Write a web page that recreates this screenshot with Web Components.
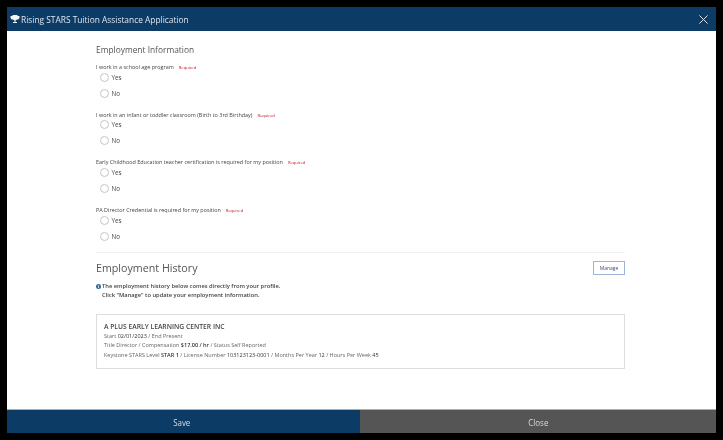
<!DOCTYPE html>
<html>
<head>
<meta charset="utf-8">
<title>Rising STARS</title>
<style>
html, body { margin: 0; padding: 0; background: #000; }
body { width: 723px; height: 440px; overflow: hidden; font-family: "Open Sans", sans-serif; }
</style>
</head>
<body>
<app-dialog title-text="Rising STARS Tuition Assistance Application">
  <section-title>Employment Information</section-title>
  <radio-question label="I work in a school age program"></radio-question>
  <radio-question label="I work in an infant or toddler classroom (Birth to 3rd Birthday)"></radio-question>
  <radio-question label="Early Childhood Education teacher certification is required for my position"></radio-question>
  <radio-question label="PA Director Credential is required for my position"></radio-question>
  <employment-history></employment-history>
</app-dialog>

<script>
const dialogTemplate = document.createElement("template");
dialogTemplate.innerHTML = `
  <style>
    :host { display: flex; flex-direction: column; box-sizing: border-box; width: 709px; height: 426px; margin: 7px 0 0 7px; background: #fff; color: #444; }
    header { flex: 0 0 24px; box-sizing: border-box; display: flex; align-items: center; justify-content: space-between; background: #0c3b66; color: #dfe7ef; font-size: 8.400px; padding: 0 8px 0 3px; filter: blur(.3px); }
    .title { display: flex; align-items: center; gap: 1px; }
    main { flex: 1; padding: 13px 91px 0 89px; min-height: 0; filter: blur(.35px); }
    footer { flex: 0 0 24px; box-sizing: border-box; display: flex; border-top: 1px solid #9fb2c4; font-size: 9px; color: #dcdcdc; filter: blur(.3px); }
    footer div { box-sizing: border-box; display: flex; align-items: center; justify-content: center; padding-top: 2px; }
    footer span { display: inline-block; transform: scaleX(.88); }
    .save { width: 353px; padding-right: 3px; background: #0c3b66; }
    .close { flex: 1; background: #555; }
  </style>
  <header>
    <div class="title">
      <svg width="10" height="10" viewBox="0 0 10 10"><path fill="#f2f5f8" d="M2.500 1h5v1H9.500v1.200C9.500 4.600 8.500 5.400 7 5.600 6.600 6 6 6.300 5.500 6.400V8H7v1H3V8h1.500V6.400C4 6.300 3.400 6 3 5.600 1.500 5.400.5 4.600.5 3.200V2h2z"/></svg>
      <span id="title"></span>
    </div>
    <svg width="9" height="9" viewBox="0 0 10 10"><path stroke="#dfe8f0" stroke-width="1.100" d="M.5.500l9 9M9.500.500l-9 9"/></svg>
  </header>
  <main><slot></slot></main>
  <footer><div class="save"><span>Save</span></div><div class="close"><span>Close</span></div></footer>
`;
class AppDialog extends HTMLElement {
  constructor() {
    super();
    const root = this.attachShadow({ mode: "open" });
    root.appendChild(dialogTemplate.content.cloneNode(true));
    root.getElementById("title").textContent = this.getAttribute("title-text");
  }
}
customElements.define("app-dialog", AppDialog);

class SectionTitle extends HTMLElement {
  constructor() {
    super();
    this.attachShadow({ mode: "open" }).innerHTML = `
      <style>:host { display: block; font-size: 8.400px; line-height: 12px; color: #555; margin-bottom: 7px; }</style>
      <slot></slot>`;
  }
}
customElements.define("section-title", SectionTitle);

class RadioQuestion extends HTMLElement {
  constructor() {
    super();
    const root = this.attachShadow({ mode: "open" });
    root.innerHTML = `
      <style>
        :host { display: block; height: 47.700px; }
        .label { font-size: 5.450px; line-height: 8px; margin-bottom: -3px; color: #444; white-space: nowrap; }
        .req { color: #c8102e; font-size: 4.100px; margin-left: 5px; }
        .opt { display: flex; align-items: center; height: 16px; padding-left: 3.500px; font-size: 6.300px; color: #444; gap: 3px; }
        .opt i { width: 7px; height: 7px; border: 1px solid #c4c4c4; border-radius: 50%; background: #fff; }
      </style>
      <div class="label"><span id="text"></span><span class="req">Required</span></div>
      <div class="opt"><i></i>Yes</div>
      <div class="opt"><i></i>No</div>`;
    root.getElementById("text").textContent = this.getAttribute("label");
  }
}
customElements.define("radio-question", RadioQuestion);

const historyTemplate = document.createElement("template");
historyTemplate.innerHTML = `
  <style>
    :host { display: block; border-top: 1px solid #f1f1f1; margin-top: -2px; padding-top: 7px; color: #444; }
    .top { display: flex; justify-content: space-between; align-items: center; }
    h2 { margin: 0; font-size: 10.700px; font-weight: 400; line-height: 16px; color: #555; }
    button { width: 32px; height: 14px; padding: 0; border: 1px solid #9db4d6; background: #fff; color: #3d4f7a; font: 5px "Open Sans", sans-serif; }
    .info { margin-top: 6px; font-size: 5.750px; line-height: 9px; font-weight: 600; color: #444; }
    .info .row { display: flex; align-items: center; gap: 1px; }
    .info .row + .row { padding-left: 6px; }
    .card { box-sizing: border-box; height: 55px; margin-top: 14px; padding: 7px 7px; border: 1px solid #ddd; font-size: 5.500px; line-height: 9.400px; color: #666; white-space: nowrap; }
    .name { font-size: 6.750px; font-weight: 600; color: #444; line-height: 10px; }
    b { font-weight: 400; color: #333; }
    b.s { font-weight: 600; }
  </style>
  <div class="top"><h2>Employment History</h2><button>Manage</button></div>
  <div class="info">
    <div class="row"><svg width="5" height="5" viewBox="0 0 10 10"><circle cx="5" cy="5" r="5" fill="#3a6a96"/><path stroke="#fff" stroke-width="1.600" d="M5 4.200v3.600M5 2v1.400"/></svg>The employment history below comes directly from your profile.</div>
    <div class="row">Click "Manage" to update your employment information.</div>
  </div>
  <div class="card">
    <div class="name">A PLUS EARLY LEARNING CENTER INC</div>
    <div>Start <b>02/01/2023</b> / End Present</div>
    <div>Title Director / Compensation <b class="s">$17.00 / hr</b> / Status Self Reported</div>
    <div>Keystone STARS Level <b class="s">STAR 1</b> / License Number <b>103123123-0001</b> / Months Per Year <b>12</b> / Hours Per Week <b>45</b></div>
  </div>
`;
class EmploymentHistory extends HTMLElement {
  constructor() {
    super();
    this.attachShadow({ mode: "open" }).appendChild(historyTemplate.content.cloneNode(true));
  }
}
customElements.define("employment-history", EmploymentHistory);
</script>
</body>
</html>
